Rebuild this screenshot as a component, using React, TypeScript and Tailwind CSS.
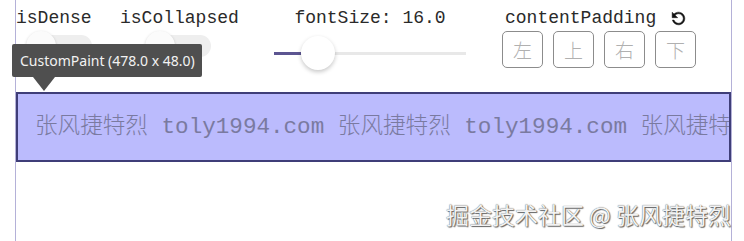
import React from 'react';

function Switch() {
  return (
    <div className="relative flex h-[30px] w-[66px] items-center">
      <div className="h-[22px] w-full rounded-full bg-[#eeeeee]" />
      <div className="absolute left-0 top-0 h-[30px] w-[30px] rounded-full bg-[#fbfbfb] shadow-[0_1px_3px_rgba(0,0,0,0.2)]" />
    </div>
  );
}

function Slider() {
  return (
    <div className="relative flex h-[34px] w-full items-center">
      <div className="flex h-[3px] w-full">
        <div className="w-[27px] bg-[#5c5591]" />
        <div className="flex-1 bg-[#e8e8e8]" />
      </div>
      <div className="absolute left-[27px] top-0 h-[34px] w-[34px] rounded-full bg-white shadow-[0_2px_4px_rgba(0,0,0,0.22)]" />
    </div>
  );
}

function RefreshIcon() {
  return (
    <svg width="19" height="19" viewBox="0 0 24 24" className="-scale-x-100">
      <path
        fill="#111"
        stroke="#111"
        strokeWidth="0.6"
        d="M17.65 6.35C16.2 4.9 14.21 4 12 4c-4.42 0-7.99 3.58-7.99 8s3.57 8 7.99 8c3.73 0 6.84-2.55 7.73-6h-2.08c-.82 2.33-3.04 4-5.65 4-3.31 0-6-2.69-6-6s2.69-6 6-6c1.66 0 3.14.69 4.22 1.78L13 11h7V4l-2.35 2.35z"
      />
    </svg>
  );
}

const sides = ['左', '上', '右', '下'];
const line = '张风捷特烈 toly1994.com ';

export default function App() {
  return (
    <div className="relative h-[241px] w-[744px] overflow-hidden bg-white">
      <div className="ml-[15px] flex h-[241px] w-[717px] flex-col border-x border-[#b4b1d8]">
        {/* controls row */}
        <div className="flex h-[92px] items-start pt-[8px] font-['Liberation_Mono','Noto_Sans_CJK_SC',monospace] text-[18px] leading-[20px] text-[#2a2a2a]">
          <div className="flex w-[104px] flex-col">
            <span>isDense</span>
            <div className="ml-[10px] mt-[3px]">
              <Switch />
            </div>
          </div>
          <div className="flex w-[154px] flex-col">
            <span>isCollapsed</span>
            <div className="ml-[25px] mt-[3px]">
              <Switch />
            </div>
          </div>
          <div className="flex w-[192px] flex-col items-center">
            <span>fontSize: 16.0</span>
            <div className="mt-[8px] w-full">
              <Slider />
            </div>
          </div>
          <div className="ml-[36px] flex flex-col">
            <div className="flex items-center gap-[13px] pl-[3px]">
              <span>contentPadding</span>
              <RefreshIcon />
            </div>
            <div className="mt-[3px] flex gap-[10px]">
              {sides.map((s) => (
                <div
                  key={s}
                  className="flex h-[37px] w-[41px] items-center justify-center rounded-[5px] border border-[#8c8c8c] font-['Noto_Sans_CJK_SC',sans-serif] text-[19px] font-light text-[#b0b0b0]"
                >
                  {s}
                </div>
              ))}
            </div>
          </div>
        </div>

        {/* custom paint box */}
        <div className="h-[70px] overflow-hidden whitespace-nowrap border-2 border-[#3f3e78] bg-[#bbbbfd] pl-[17px] font-['Liberation_Mono','Noto_Sans_CJK_SC',monospace] text-[22.6px] font-light leading-[66px] text-[#7a7aa0]">
          {line + line + line}
        </div>
      </div>

      {/* inspector tooltip */}
      <div className="absolute left-[12px] top-[44px] flex h-[33px] w-[190px] items-center rounded-[2px] bg-[#4f4f4f] pl-[8px] font-['Noto_Sans',sans-serif] text-[14px] text-[#f2f2f2]">
        CustomPaint (478.0 x 48.0)
      </div>
      <div className="absolute left-[33px] top-[77px] h-0 w-0 border-x-[11px] border-t-[14px] border-x-transparent border-t-[#4f4f4f]" />

      {/* watermark */}
      <div className="absolute right-[13px] top-[199px] whitespace-nowrap font-['Noto_Sans_CJK_SC',sans-serif] text-[23px] leading-[30px] text-[#f2f2f2] [text-shadow:0_0_1px_#444,1px_1px_1px_#666]">
        掘金技术社区 @ 张风捷特烈
      </div>
    </div>
  );
}
